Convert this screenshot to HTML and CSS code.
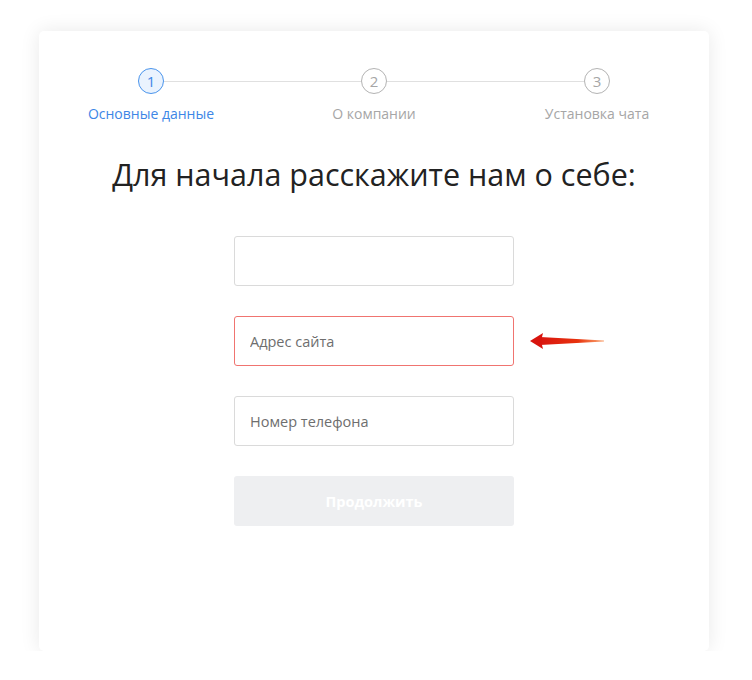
FILE: index.html
```html
<!DOCTYPE html>
<html lang="ru">

<head>
    <meta charset="UTF-8">
    <meta name="viewport" content="width=device-width, initial-scale=1.0">
    <title>Регистрация</title>
    <link rel="stylesheet" href="styles.css">
</head>

<body>

    <div class="card">

        <div class="steps">
            <div class="step active">
                <div class="num">1</div>
                <div class="step_t">Основные данные</div>
            </div>
            <div class="step">
                <div class="num">2</div>
                <div class="step_t">О компании</div>
            </div>
            <div class="step">
                <div class="num">3</div>
                <div class="step_t">Установка чата</div>
            </div>
        </div>

        <h1>Для начала расскажите нам о себе:</h1>

        <form class="regf" action="javascript:void(0)">
            <input type="text" name="name">

            <div class="field">
                <input class="err" type="text" name="site" placeholder="Адрес сайта">
                <!-- pointer arrow -->
                <svg class="arrow" width="76" height="18" viewBox="0 0 76 18">
                    <defs>
                        <linearGradient id="shaft" x1="0" y1="0" x2="1" y2="0">
                            <stop offset="0" stop-color="#d9150f" />
                            <stop offset="0.6" stop-color="#e8330e" />
                            <stop offset="1" stop-color="#f56a1a" stop-opacity="0.6" />
                        </linearGradient>
                    </defs>
                    <path d="M10 5 L74 8.6 L74 9.4 L10 13 Z" fill="url(#shaft)" />
                    <path d="M0 9 L13 1 L11 9 L13 17 Z" fill="#d8140e" />
                </svg>
            </div>

            <input type="tel" name="phone" placeholder="Номер телефона">

            <button type="submit" disabled>Продолжить</button>
        </form>

    </div>

</body>

</html>
```

FILE: styles.css
```css
body {
    background-color: #ffffff;
    margin: 0;
    font-family: 'Open Sans', sans-serif;
}

.card {
    margin: 31px 0 0 39px;
    width: 670px;
    height: 620px;
    background-color: #ffffff;
    border-radius: 5px;
    box-shadow: 0 0 20px rgba(0, 0, 0, 0.09);
    box-sizing: border-box;
    padding-top: 37px;
}

.steps {
    display: grid;
    grid-template-columns: repeat(3, 223px);
    justify-content: center;
}

.step {
    position: relative;
    display: flex;
    flex-direction: column;
    align-items: center;
}

/* connecting line to the next step */
.step:not(:last-child)::after {
    content: "";
    position: absolute;
    top: 13px;
    left: calc(50% + 13px);
    width: calc(100% - 26px);
    height: 1px;
    background-color: #e0e0e0;
}

.num {
    width: 26px;
    height: 26px;
    box-sizing: border-box;
    border: 1px solid #b3b3b3;
    border-radius: 50%;
    display: flex;
    align-items: center;
    justify-content: center;
    font-size: 15px;
    color: #a6a6a6;
}

.step_t {
    margin-top: 10px;
    font-size: 14px;
    line-height: 20px;
    color: #a6a6a6;
}

.step.active .num {
    border-color: #4a94ec;
    background-color: #eaf3fe;
    color: #3d86e6;
}

.step.active .step_t {
    color: #3d86e6;
}

h1 {
    font-size: 30.5px;
    font-weight: 400;
    text-align: center;
    color: #222222;
    margin: 30px 0 0 0;
    line-height: 40px;
}

.regf {
    width: 280px;
    margin: 42px auto 0 auto;
    display: flex;
    flex-direction: column;
    gap: 30px;
}

.field {
    position: relative;
}

input[type=text],
input[type=tel] {
    width: 100%;
    height: 50px;
    padding: 0 15px;
    box-sizing: border-box;
    border: 1px solid #dadada;
    border-radius: 3px;
    font-family: 'Open Sans', sans-serif;
    font-size: 14.5px;
    color: #333333;
    display: block;
}

input::placeholder {
    color: #6e6e6e;
}

input.err {
    border-color: #f07470;
}

input:focus {
    outline: none;
}

.arrow {
    position: absolute;
    left: 296px;
    top: 16px;
}

button {
    height: 50px;
    border: none;
    border-radius: 3px;
    background-color: #eeeff1;
    color: #ffffff;
    font-family: 'Open Sans', sans-serif;
    font-size: 14.5px;
    font-weight: 700;
}
```
